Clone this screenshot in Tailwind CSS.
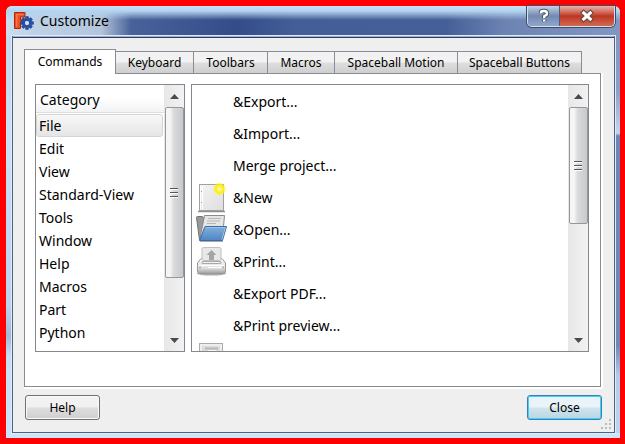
<!DOCTYPE html>
<html lang="en">
<head>
<meta charset="utf-8">
<title>Customize</title>
<script src="https://cdn.jsdelivr.net/npm/@tailwindcss/browser@4"></script>
</head>
<body class="bg-[#ff0000] text-black font-['Noto_Sans','Open_Sans',sans-serif]">
<div class="h-screen pt-[6px] pb-[6px] pl-[6px] pr-[5px] overflow-hidden">
  <main class="flex h-full flex-col rounded-t-md bg-[linear-gradient(to_right,transparent_0,transparent_99%,#ffffff00_100%),linear-gradient(to_bottom,#c4daf0_0,#c4daf0_80px,#c9e1f8_130px,#b9d3ee_300px,#9fb9d8_330px,#c5def5_350px,#cbe4fc_100%)]">
    <header class="flex h-[30px] shrink-0 items-start justify-between rounded-t-md bg-[linear-gradient(to_bottom,#c5e2f9_0,#b3d3ef_5px,transparent_14px),linear-gradient(to_right,#c9deee_0,#bdd2e6_30px,#b3c5db_95px,#4a629a_125px,#344d89_230px,#445e97_290px,#455f98_440px,#6d84b3_500px,#8296bf_100%)] pl-2">
      <div class="flex h-[30px] items-center gap-[6px]">
        <svg class="h-5 w-5" viewBox="0 0 20 20" aria-hidden="true">
          <path d="M0.500 1.500H11V6H6.500V9H9V12.500H6.500V17.500H0.500Z" fill="#ef4a20" stroke="#a72b12"/>
          <path d="M2 3H9.500V4.200H3.500V16H2Z" fill="#ff7549"/>
          <g transform="translate(13 12) scale(.95)">
            <g fill="#2451a5" stroke="#173776" stroke-width=".5">
              <path d="M-1.400-6.800H1.400L1.700-4.400H-1.700ZM-1.400 6.800H1.400L1.700 4.400H-1.700Z"/>
              <path d="M-1.400-6.800H1.400L1.700-4.400H-1.700ZM-1.400 6.800H1.400L1.700 4.400H-1.700Z" transform="rotate(45)"/>
              <path d="M-1.400-6.800H1.400L1.700-4.400H-1.700ZM-1.400 6.800H1.400L1.700 4.400H-1.700Z" transform="rotate(90)"/>
              <path d="M-1.400-6.800H1.400L1.700-4.400H-1.700ZM-1.400 6.800H1.400L1.700 4.400H-1.700Z" transform="rotate(135)"/>
            </g>
            <circle r="3.500" fill="none" stroke="#2550a4" stroke-width="3"/>
            <circle r="2" fill="#d7e5f5"/>
          </g>
        </svg>
        <h1 class="text-[14px] leading-5">Customize</h1>
      </div>
      <div class="mr-[5px] flex h-[21px] overflow-hidden rounded-b-[5px] border border-t-0 border-[#d5dff0] shadow-[0_0_0_1px_#3c4a6c]">
        <button aria-label="What's this?" class="flex w-8 items-center justify-center border-r border-[#4a5a80] bg-linear-to-b from-[#c5d2e4] from-0% via-[#7489af] via-50% to-[#90a7cc]">
          <svg class="h-4 w-4" viewBox="0 0 16 16" aria-hidden="true"><g fill="none" stroke-linejoin="round"><path d="M5 5.200V4Q5 3 8 3Q11 3 11 5.500Q11 7.200 8.200 8.200V10M8.200 11.500V13.600" stroke="#4b5568" stroke-width="4.400"/><path d="M5 5.200V4Q5 3 8 3Q11 3 11 5.500Q11 7.200 8.200 8.200V10M8.200 11.500V13.600" stroke="#fff" stroke-width="2.400"/></g></svg>
        </button>
        <button aria-label="Close window" class="flex w-[54px] items-center justify-center bg-linear-to-b from-[#e5b5ac] from-0% via-[#bd3423] via-50% to-[#d06a50]">
          <svg class="h-4 w-4" viewBox="0 0 16 16" aria-hidden="true"><path d="M2.800 3L13.200 13M13.200 3L2.800 13" stroke="#5e4548" stroke-width="5"/><path d="M3.600 3.800L12.400 12.200M12.400 3.800L3.600 12.200" stroke="#fff" stroke-width="3"/></svg>
        </button>
      </div>
    </header>

    <div class="flex min-h-0 flex-1 pb-[5px] pl-[6px]">
    <section class="relative flex min-h-0 min-w-0 flex-1 flex-col border border-t-0 border-[#53627a] bg-[#efefef] pb-3 pl-[11px] pr-3 shadow-[0_0_0_1px_#dcecfb]">
      <div class="-ml-[11px] -mr-3 h-[2px] shrink-0 border-b border-[#2e3d61] bg-[#a0add0]"></div>
      <nav role="tablist" class="z-1 -mb-px mt-[11px] flex h-[25px] shrink-0 items-end text-[12px] leading-4">
        <button role="tab" aria-selected="true" class="h-[25px] w-[92px] border border-b-0 border-[#898c95] bg-white">Commands</button>
        <button role="tab" class="h-[23px] w-[78px] border border-l-0 border-[#898c95] bg-linear-to-b from-[#f2f2f2] from-45% via-[#dddddd] via-55% to-[#cfcfcf]">Keyboard</button>
        <button role="tab" class="h-[23px] w-[74px] border border-l-0 border-[#898c95] bg-linear-to-b from-[#f2f2f2] from-45% via-[#dddddd] via-55% to-[#cfcfcf]">Toolbars</button>
        <button role="tab" class="h-[23px] w-[67px] border border-l-0 border-[#898c95] bg-linear-to-b from-[#f2f2f2] from-45% via-[#dddddd] via-55% to-[#cfcfcf]">Macros</button>
        <button role="tab" class="h-[23px] w-[123px] border border-l-0 border-[#898c95] bg-linear-to-b from-[#f2f2f2] from-45% via-[#dddddd] via-55% to-[#cfcfcf]">Spaceball Motion</button>
        <button role="tab" class="h-[23px] w-[124px] border border-l-0 border-[#898c95] bg-linear-to-b from-[#f2f2f2] from-45% via-[#dddddd] via-55% to-[#cfcfcf]">Spaceball Buttons</button>
      </nav>
      <div role="tabpanel" class="mr-px flex min-h-0 flex-1 gap-[6px] border border-[#898c95] bg-white pb-[34px] pl-[10px] pr-[11px] pt-[10px] text-[14px] shadow-[1px_1px_0_1px_#fff]">
        <div class="flex w-[150px] shrink-0 overflow-hidden border border-[#828790]">
          <div class="flex min-w-0 flex-1 flex-col">
            <h2 id="cat" class="h-7 shrink-0 border-b border-[#dcdee1] bg-linear-to-b from-white from-50% to-[#f1f2f4] pl-1 leading-[29px]">Category</h2>
            <ul role="listbox" aria-labelledby="cat" class="pr-px pt-px leading-[23px]">
              <li role="option" aria-selected="true" class="h-[23px] rounded-[3px] border border-[#d5d5d5] bg-linear-to-b from-[#f8f8f8] to-[#e5e5e5] pl-[2px] leading-[21px]">File</li>
              <li role="option" class="h-[23px] pl-[3px]">Edit</li>
              <li role="option" class="h-[23px] pl-[3px]">View</li>
              <li role="option" class="h-[23px] pl-[3px]">Standard-View</li>
              <li role="option" class="h-[23px] pl-[3px]">Tools</li>
              <li role="option" class="h-[23px] pl-[3px]">Window</li>
              <li role="option" class="h-[23px] pl-[3px]">Help</li>
              <li role="option" class="h-[23px] pl-[3px]">Macros</li>
              <li role="option" class="h-[23px] pl-[3px]">Part</li>
              <li role="option" class="h-[23px] pl-[3px]">Python</li>
              <li role="option" class="h-[23px] pl-[3px]">Measure</li>
            </ul>
          </div>
          <div class="flex w-5 shrink-0 flex-col items-center justify-between bg-linear-to-r from-[#e7e7e7] to-[#f2f2f2]">
            <button aria-label="Scroll categories up" class="flex h-[22px] w-full shrink-0 items-center justify-center"><svg class="h-[5px] w-[9px]" viewBox="0 0 9 5" aria-hidden="true"><path d="M4.500 0L9 5H0Z" fill="#4a4a4a"/></svg></button>
            <div class="flex h-[171px] w-[19px] flex-col items-center justify-center gap-[3px] rounded-[2px] border border-[#979797] bg-linear-to-r from-[#f5f5f5] from-25% via-[#d9dadc] via-45% to-[#c7c9cd]">
              <i class="h-px w-2 bg-[#555] shadow-[0_1px_0_#fff]"></i><i class="h-px w-2 bg-[#555] shadow-[0_1px_0_#fff]"></i><i class="h-px w-2 bg-[#555] shadow-[0_1px_0_#fff]"></i>
            </div>
            <span class="flex-1"></span>
            <button aria-label="Scroll categories down" class="flex h-[22px] w-full shrink-0 items-center justify-center"><svg class="h-[5px] w-[9px]" viewBox="0 0 9 5" aria-hidden="true"><path d="M0 0H9L4.500 5Z" fill="#4a4a4a"/></svg></button>
          </div>
        </div>

        <div class="flex min-w-0 flex-1 overflow-hidden border border-[#828790]">
          <ul role="listbox" aria-label="Commands" class="min-w-0 flex-1">
            <li role="option" class="flex h-8 items-center pl-[41px]">&amp;Export...</li>
            <li role="option" class="flex h-8 items-center pl-[41px]">&amp;Import...</li>
            <li role="option" class="flex h-8 items-center pl-[41px]">Merge project...</li>
            <li role="option" class="flex h-8 items-center gap-[5px] pl-1">
              <svg class="h-8 w-8" viewBox="0 0 32 32" aria-hidden="true">
                <defs><linearGradient id="pg" x2="1" y2="1"><stop stop-color="#f4f4f4"/><stop offset="1" stop-color="#dedede"/></linearGradient>
                <radialGradient id="sun"><stop offset="0" stop-color="#fffbe0"/><stop offset=".35" stop-color="#ffef55"/><stop offset=".6" stop-color="#fff000"/><stop offset="1" stop-color="#fff45a" stop-opacity="0"/></radialGradient></defs>
                <path d="M2 30.500H29" stroke="#8e8e8e" stroke-width="1.500"/>
                <rect x="3.500" y="3.500" width="24" height="26" fill="url(#pg)" stroke="#a0a0a0"/>
                <path d="M4.500 4.500V28.500M6.500 4.500V28.500" stroke="#fff"/>
                <path d="M5.500 10v1M5.500 21v1" stroke="#999"/>
                <circle cx="23.500" cy="8" r="7" fill="url(#sun)"/>
              </svg>&amp;New</li>
            <li role="option" class="flex h-8 items-center gap-[5px] pl-1">
              <svg class="h-8 w-8" viewBox="0 0 32 32" aria-hidden="true">
                <defs><linearGradient id="fo" x2="0" y2="1"><stop stop-color="#83afdd"/><stop offset="1" stop-color="#4e85c3"/></linearGradient></defs>
                <path d="M.500 4.500Q.500 3.500 1.500 3.500H6L8 5H24L26 15L24 27H3.500Z" fill="#999" stroke="#707070"/>
                <path d="M8.500 2.500H28.500L27 19L4 25Z" fill="#e5e5e5" stroke="#8a8a8a"/>
                <path d="M12 5.500H25M11 8H24M11 10.500H20" stroke="#b7b7b7"/>
                <path d="M9 13.500H30.500L26.500 27.500H3.500Z" fill="url(#fo)" stroke="#366ca9"/>
                <path d="M9.700 14.500H29.300L26 26.500" fill="none" stroke="#a0c1e5"/>
                <path d="M4 28.500H27" stroke="#aaa"/>
              </svg>&amp;Open...</li>
            <li role="option" class="flex h-8 items-center gap-[5px] pl-1">
              <svg class="h-8 w-8" viewBox="0 0 32 32" aria-hidden="true">
                <defs><linearGradient id="pr" x2="0" y2="1"><stop stop-color="#fafafa"/><stop offset=".65" stop-color="#dedede"/><stop offset="1" stop-color="#9d9d9d"/></linearGradient></defs>
                <ellipse cx="15.500" cy="28.500" rx="14.500" ry="2" fill="#aaa"/>
                <path d="M5 13.500H26L29.500 18V26Q29.500 28.500 27 28.500H4Q1.500 28.500 1.500 26V18Z" fill="url(#pr)" stroke="#999"/>
                <rect x="6" y="2.500" width="19" height="13" rx="1.500" fill="#e8e8e8" stroke="#c0c0c0"/>
                <path d="M15.500 5L20.500 10H18V15H13V10H10.500Z" fill="#a4a4a4"/>
                <path d="M2.500 20.500H28.500" stroke="#fff"/>
                <path d="M7 17.500H24" stroke="#aaa" stroke-width="3" stroke-linecap="round"/>
                <path d="M7 17.500H24" stroke="#f2f2f2" stroke-linecap="round"/>
                <path d="M12 22.500H26" stroke="#fff"/>
                <path d="M4 21.500v2M27 21.500v2" stroke="#888"/>
              </svg>&amp;Print...</li>
            <li role="option" class="flex h-8 items-center pl-[41px]">&amp;Export PDF...</li>
            <li role="option" class="flex h-8 items-center pl-[41px]">&amp;Print preview...</li>
            <li role="option" class="flex h-8 items-center pl-1" aria-label="Save">
              <svg class="h-8 w-8" viewBox="0 0 32 32" aria-hidden="true"><rect x="3.500" y="2.500" width="23" height="27" fill="#eee" stroke="#aaa"/><path d="M6 5H24V20H6Z" fill="#dcdcdc"/><path d="M9 7.500H22" stroke="#b8b8b8" stroke-width="2"/><path d="M12 10H20" stroke="#f4f4f4" stroke-width="2"/></svg></li>
          </ul>
          <div class="flex w-5 shrink-0 flex-col items-center justify-between bg-linear-to-r from-[#e7e7e7] to-[#f2f2f2]">
            <button aria-label="Scroll commands up" class="flex h-[22px] w-full shrink-0 items-center justify-center"><svg class="h-[5px] w-[9px]" viewBox="0 0 9 5" aria-hidden="true"><path d="M4.500 0L9 5H0Z" fill="#4a4a4a"/></svg></button>
            <div class="flex h-[117px] w-[19px] flex-col items-center justify-center gap-[3px] rounded-[2px] border border-[#979797] bg-linear-to-r from-[#f5f5f5] from-25% via-[#d9dadc] via-45% to-[#c7c9cd]">
              <i class="h-px w-2 bg-[#555] shadow-[0_1px_0_#fff]"></i><i class="h-px w-2 bg-[#555] shadow-[0_1px_0_#fff]"></i><i class="h-px w-2 bg-[#555] shadow-[0_1px_0_#fff]"></i>
            </div>
            <span class="flex-1"></span>
            <button aria-label="Scroll commands down" class="flex h-[22px] w-full shrink-0 items-center justify-center"><svg class="h-[5px] w-[9px]" viewBox="0 0 9 5" aria-hidden="true"><path d="M0 0H9L4.500 5Z" fill="#4a4a4a"/></svg></button>
          </div>
        </div>
      </div>
      <footer class="mt-2 flex shrink-0 justify-between pl-px text-[12px] leading-4">
        <button class="h-[25px] w-[75px] rounded-[3px] border border-[#707070] bg-linear-to-b from-[#f2f2f2] from-45% via-[#dddddd] via-55% to-[#cfcfcf] shadow-[inset_0_0_0_1px_#fafafa]">Help</button>
        <button class="h-[25px] w-[75px] rounded-[3px] border border-[#3c7fb1] bg-linear-to-b from-[#eaf3f8] from-45% via-[#cfe3ed] via-55% to-[#b9d5e4] shadow-[inset_0_0_0_1px_#3bd3fb]">Close</button>
      </footer>
      <svg class="absolute bottom-[2px] right-[2px] h-[11px] w-[11px]" viewBox="0 0 11 11" aria-hidden="true"><path fill="#bdbdbd" d="M8 0h2v2H8zM4 4h2v2H4zM8 4h2v2H8zM0 8h2v2H0zM4 8h2v2H4zM8 8h2v2H8z"/></svg>
    </section>
    <div class="w-[5px] shrink-0 border-l border-[#dcecfb] bg-[linear-gradient(to_bottom,#8296bf_0,#8ba0c8_55px,#c5d5ea_97px,#6c86b9_100px,#6f89bb_310px,#b5cce8_340px,#bcd5f0_100%)]"></div>
    </div>
  </main>
</div>
</body>
</html>
